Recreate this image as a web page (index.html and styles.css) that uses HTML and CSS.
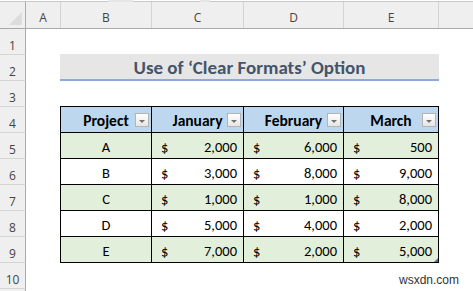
FILE: index.html
```html
<!DOCTYPE html>
<html>
<head>
<meta charset="utf-8">
<link rel="stylesheet" href="styles.css">
</head>
<body>
<div class="app">
  <div class="ribbon"><span class="seg s1"></span><span class="gap g1"></span><span class="seg s2"></span><span class="gap g2"></span><span class="seg s3"></span></div>
  <div class="sheet">
    <div class="corner"><span class="tri"></span></div>
    <div class="colhdr first">A</div>
    <div class="colhdr">B</div>
    <div class="colhdr">C</div>
    <div class="colhdr">D</div>
    <div class="colhdr">E</div>
    <div class="colhdr"></div>
    <div class="hline"></div>

    <div class="rowhdr r1 top">1</div>
    <div class="rowhdr r2">2</div>
    <div class="rowhdr r3">3</div>
    <div class="rowhdr r4">4</div>
    <div class="rowhdr r5">5</div>
    <div class="rowhdr r6">6</div>
    <div class="rowhdr r7">7</div>
    <div class="rowhdr r8">8</div>
    <div class="rowhdr r9">9</div>
    <div class="rowhdr r10">10</div>
    <div class="rowhdr r11"></div>

    <div class="title">Use of ‘Clear Formats’ Option</div>

    <div class="table">
      <div class="th">Project<span class="dd"></span></div>
      <div class="th">January<span class="dd"></span></div>
      <div class="th">February<span class="dd"></span></div>
      <div class="th">March<span class="dd"></span></div>

      <div class="td c green">A</div>
      <div class="td m green"><span>$</span><span>2,000</span></div>
      <div class="td m green"><span>$</span><span>6,000</span></div>
      <div class="td m green"><span>$</span><span>500</span></div>

      <div class="td c">B</div>
      <div class="td m"><span>$</span><span>3,000</span></div>
      <div class="td m"><span>$</span><span>8,000</span></div>
      <div class="td m"><span>$</span><span>9,000</span></div>

      <div class="td c green">C</div>
      <div class="td m green"><span>$</span><span>1,000</span></div>
      <div class="td m green"><span>$</span><span>1,000</span></div>
      <div class="td m green"><span>$</span><span>8,000</span></div>

      <div class="td c">D</div>
      <div class="td m"><span>$</span><span>5,000</span></div>
      <div class="td m"><span>$</span><span>4,000</span></div>
      <div class="td m"><span>$</span><span>2,000</span></div>

      <div class="td c green">E</div>
      <div class="td m green"><span>$</span><span>7,000</span></div>
      <div class="td m green"><span>$</span><span>2,000</span></div>
      <div class="td m green last"><span>$</span><span>5,000</span><span class="handle"></span></div>
    </div>
  </div>
  <div class="watermark">wsxdn.com</div>
</div>
</body>
</html>
```

FILE: styles.css
```css
* { box-sizing: border-box; }
html, body { margin: 0; padding: 0; background: #fff; }
.app {
  position: relative;
  width: 473px;
  height: 291px;
  overflow: hidden;
  font-family: "Carlito", "Calibri", "Lato", sans-serif;
}
.ribbon {
  display: flex;
  height: 2px;
  background: #e6e6e6;
}
.seg { display: block; height: 2px; background: #fff; border-bottom: 1px solid #c8c8c8; }
.s1 { width: 108px; }
.g1 { width: 25px; }
.s2 { width: 67px; }
.g2 { width: 10px; }
.s3 { flex: 1; }

.sheet {
  display: grid;
  grid-template-columns: 26px 34px 91px 92px 100px 95px 1fr;
  grid-template-rows: 26px repeat(10, 26px) 1fr;
  height: 289px;
}
.corner {
  position: relative;
  background: #efefef;
  border-right: 1px solid #ababab;
}
.corner .tri {
  position: absolute;
  right: 3px;
  bottom: 3px;
  width: 0; height: 0;
  border-left: 13px solid transparent;
  border-bottom: 13px solid #dcdcdc;
}
.colhdr {
  background: #efefef;
  border-left: 1px solid #d4d4d4;
  font-family: "Segoe UI", "Open Sans", "Noto Sans", sans-serif;
  font-size: 12px;
  color: #444;
  text-align: center;
  padding-top: 9px;
  line-height: 14px;
}
.colhdr.first { border-left: none; }
.hline {
  grid-row: 2;
  grid-column: 1 / -1;
  border-top: 1px solid #a9a9a9;
  height: 0;
  align-self: start;
}
.rowhdr {
  grid-column: 1;
  background: #efefef;
  border-top: 1px solid #d6d6d6;
  border-right: 1px solid #ababab;
  font-family: "Segoe UI", "Open Sans", "Noto Sans", sans-serif;
  font-size: 12px;
  color: #444;
  text-align: center;
  padding-top: 10px;
  line-height: 14px;
}
.rowhdr.top { border-top-color: #a9a9a9; }
.r1 { grid-row: 2; }
.r2 { grid-row: 3; }
.r3 { grid-row: 4; }
.r4 { grid-row: 5; }
.r5 { grid-row: 6; }
.r6 { grid-row: 7; }
.r7 { grid-row: 8; }
.r8 { grid-row: 9; }
.r9 { grid-row: 10; }
.r10 { grid-row: 11; }
.r11 { grid-row: 12; }

.title {
  grid-row: 3;
  grid-column: 3 / 7;
  justify-self: start;
  align-self: start;
  width: 379px;
  height: 27px;
  background: #e7e6e6;
  border-bottom: 2px solid #8ea9db;
  color: #44546a;
  font-weight: bold;
  font-size: 19px;
  text-align: center;
  line-height: 22px;
  padding-top: 3px;
}

.table {
  grid-row: 5 / 11;
  grid-column: 3 / 7;
  justify-self: start;
  align-self: start;
  display: grid;
  grid-template-columns: 91px 92px 100px 95px;
  grid-auto-rows: 26px;
  border-right: 1px solid #000;
  border-bottom: 1px solid #000;
  font-size: 14.5px;
  color: #000;
}
.th, .td {
  border-left: 1px solid #000;
  border-top: 1px solid #000;
  position: relative;
}
.th {
  background: #bdd7ee;
  font-weight: bold;
  font-size: 15.5px;
  text-align: center;
  line-height: 18px;
  padding-top: 5px;
}
.dd {
  position: absolute;
  right: 2px;
  top: 6px;
  width: 14px;
  height: 14px;
  border: 1px solid #b4b4b4;
  background: linear-gradient(#ffffff, #e6e6e6);
}
.dd::after {
  content: "";
  position: absolute;
  left: 3px;
  top: 6px;
  border-left: 3px solid transparent;
  border-right: 3px solid transparent;
  border-top: 3px solid #707070;
}
.td { line-height: 18px; padding-top: 5px; }
.td.c { text-align: center; }
.td.m {
  display: flex;
  justify-content: space-between;
  padding-left: 9px;
  padding-right: 6px;
}
.green { background: #e2efda; }
.handle {
  position: absolute;
  right: 0;
  bottom: 0;
  width: 0; height: 0;
  border-left: 4px solid transparent;
  border-bottom: 4px solid #4a6fb5;
}
.watermark {
  position: absolute;
  left: 399px;
  top: 273px;
  font-family: "Liberation Sans", Arial, sans-serif;
  font-size: 12px;
  color: #333;
  background: #fff;
}
```
